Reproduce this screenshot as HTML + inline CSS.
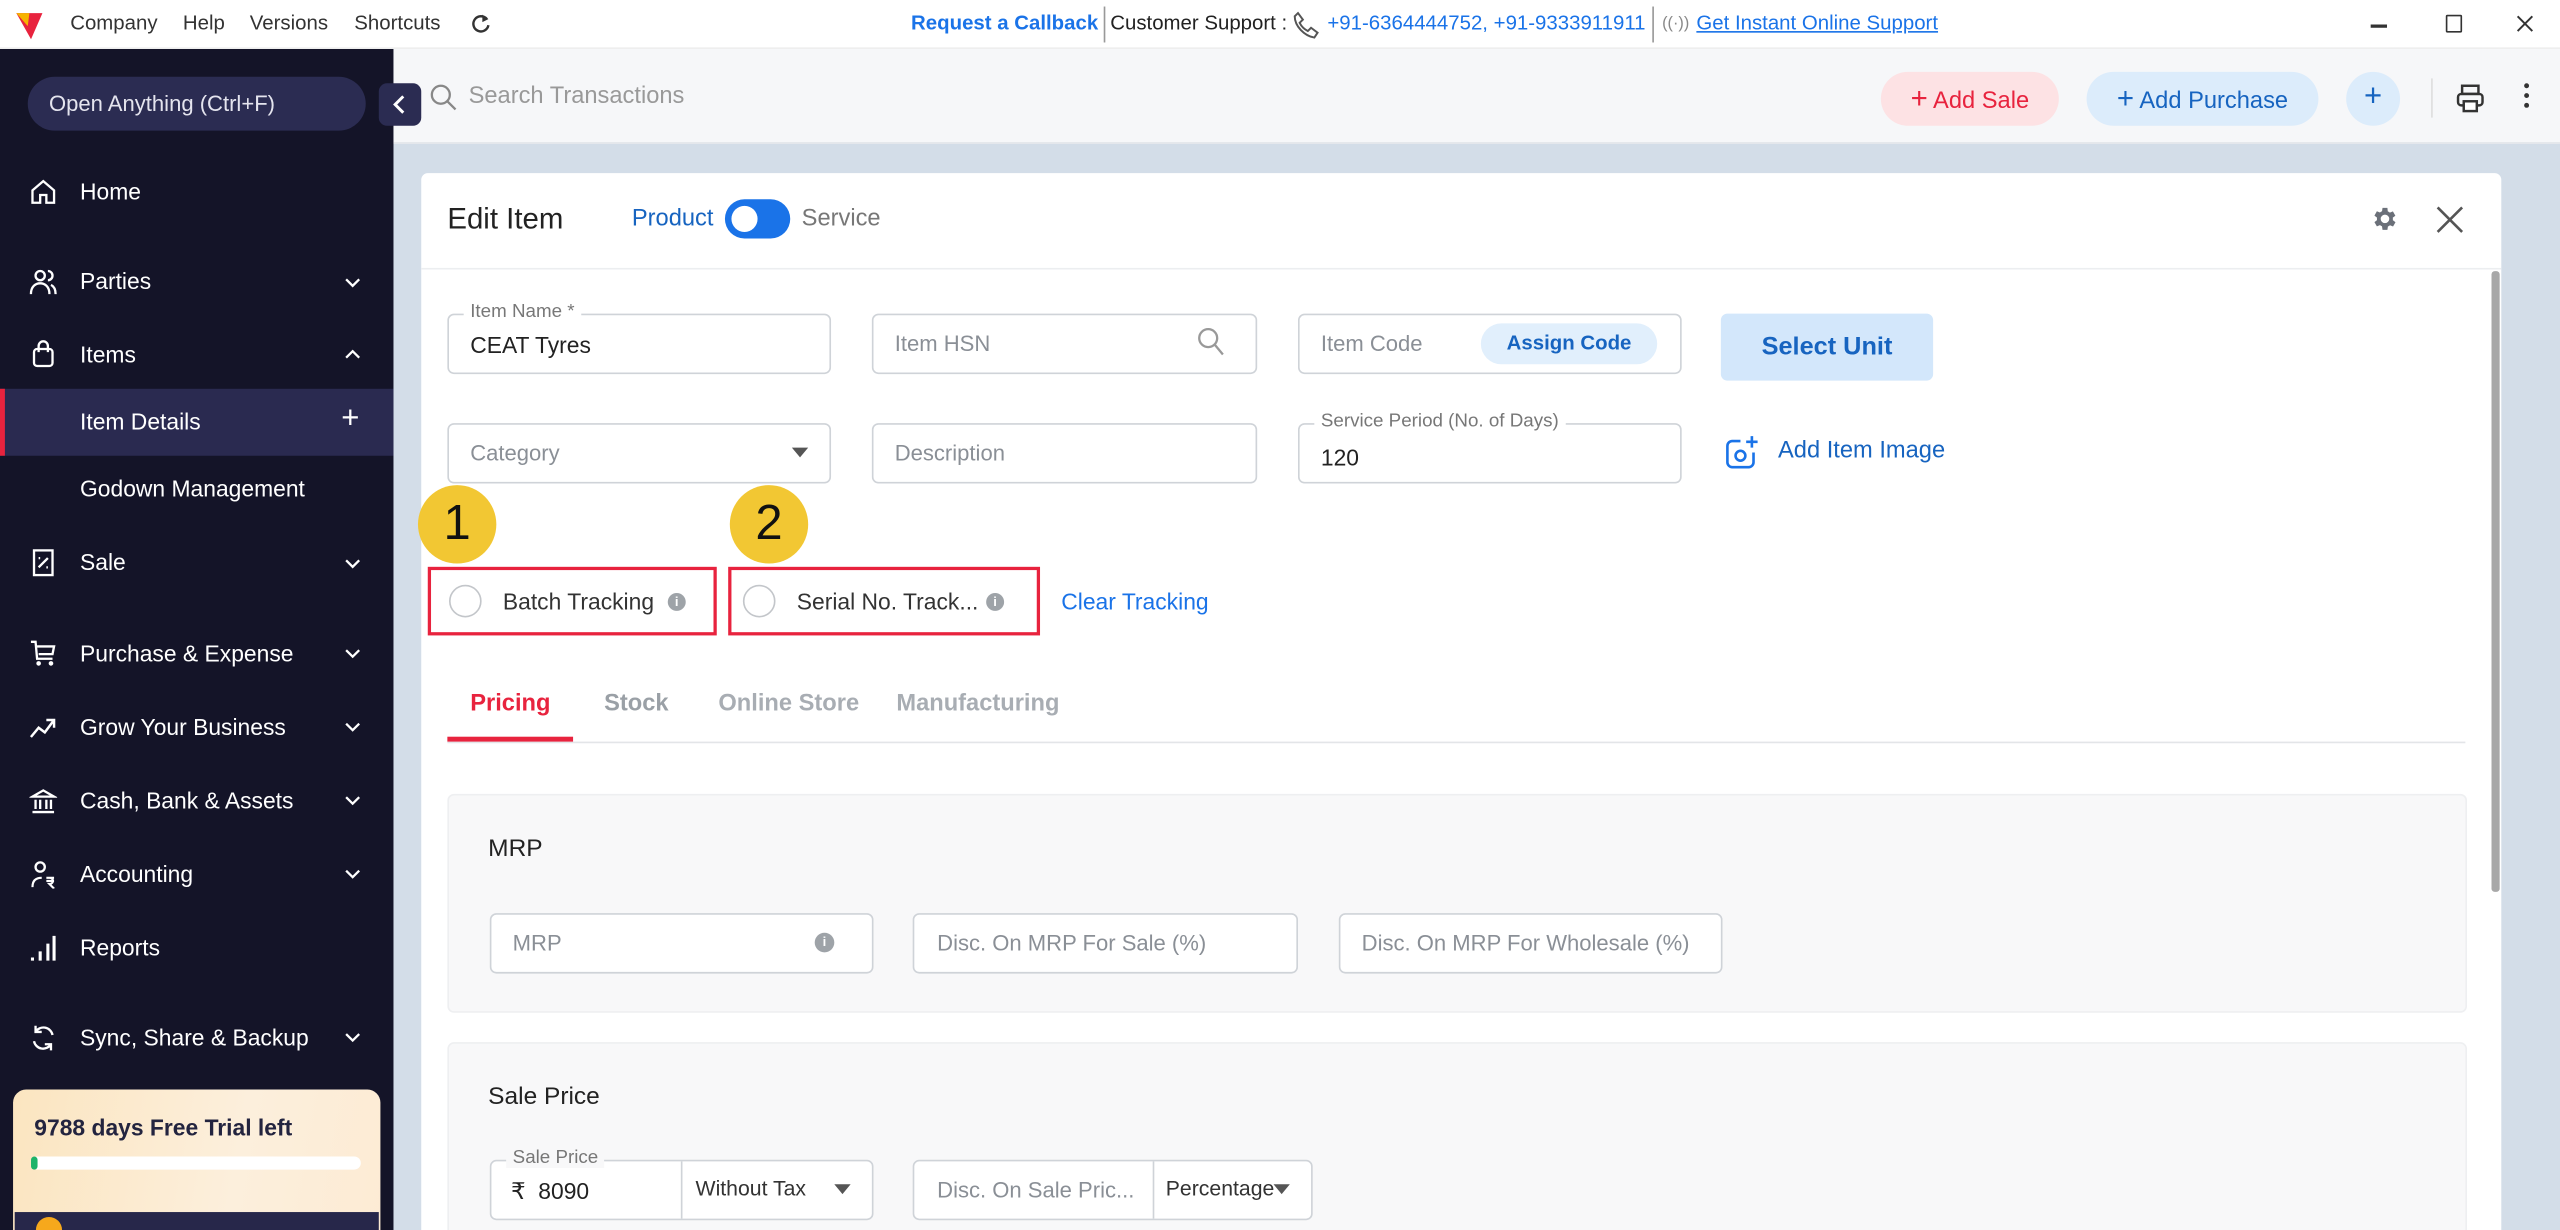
<!DOCTYPE html>
<html><head><meta charset="utf-8"><style>
*{box-sizing:border-box;margin:0;padding:0}
html,body{width:2560px;height:1230px;overflow:hidden;background:#fff}
#w{position:absolute;left:0;top:0;width:1568px;height:753px;transform:scale(1.6327,1.6335);transform-origin:0 0;font-family:"Liberation Sans",sans-serif;overflow:hidden;background:#d3dde8}
.a{position:absolute;white-space:nowrap}
.top{left:0;top:0;width:1568px;height:30px;background:#fff;border-bottom:1px solid #eee}
.tm{font-size:12.5px;color:#333;top:7px}
.sb{left:0;top:30px;width:241px;height:723px;background:#141428}
.mi{color:#fff;font-size:14px;left:49px}
.ic{left:18px;width:17px;height:17px}
.chev{left:211px;width:10px;height:10px}
.hdr{left:241px;top:30px;width:1327px;height:58px;background:#f6f7f9;border-bottom:1px solid #e3e6ea}
.card{left:258px;top:106px;width:1274px;height:660px;background:#fff;border-radius:4px}
.inp{border:1px solid #cfd3d8;border-radius:4px;background:#fff;height:37px}
.ph{font-size:13.5px;color:#8a8f96}
.lbl{font-size:11.5px;color:#777;background:#fff;padding:0 4px}
.badge{width:48px;height:48px;border-radius:50%;background:#f2c733;font-size:30px;color:#111;text-align:center;line-height:48px}
.rb{border:2.5px solid #e8233e}
.radio{width:20px;height:20px;border:1.5px solid #c3c6ca;border-radius:50%}
.info{width:11px;height:11px;border-radius:50%;background:#9ea3a8;color:#fff;font-size:8px;text-align:center;line-height:11px;font-weight:bold}
.sec{background:#f8f8f9;border:1px solid #eeeff1;border-radius:4px}
</style></head><body><div id="w">
<div class="a top"></div>
<svg class="a" style="left:9px;top:7px" width="18" height="18" viewBox="0 0 18 18"><path d="M1 1h16l-7 16z" fill="#e8233e"/><path d="M1 1h8l-1 8z" fill="#f6b400"/></svg>
<div class="a tm" style="left:43px">Company</div><div class="a tm" style="left:112px">Help</div><div class="a tm" style="left:153px">Versions</div><div class="a tm" style="left:217px">Shortcuts</div>
<svg class="a" style="left:288px;top:8px" width="13" height="13" viewBox="0 0 14 14"><path d="M11 4A5 5 0 1 0 12 8" fill="none" stroke="#333" stroke-width="1.6"/><path d="M8 1l4 3-4 2z" fill="#333"/></svg>
<div class="a tm" style="left:558px;color:#1a73e8;font-weight:bold;font-size:12.5px">Request a Callback</div>
<div class="a" style="left:676px;top:4px;width:1px;height:22px;background:#999"></div>
<div class="a tm" style="left:680px;color:#222">Customer Support :</div>
<svg class="a" style="left:791px;top:6px" width="18" height="18" viewBox="0 0 18 18"><path d="M4 2l3 4-2 2c1 2 3 4 5 5l2-2 4 3-2 3C8 16 2 10 2 4z" fill="none" stroke="#555" stroke-width="1.2"/></svg>
<div class="a tm" style="left:813px;color:#1a73e8">+91-6364444752, +91-9333911911</div>
<div class="a" style="left:1012px;top:4px;width:1px;height:22px;background:#999"></div>
<div class="a tm" style="left:1018px;color:#888;font-size:10px;top:9px">((·))</div>
<div class="a tm" style="left:1039px;color:#1a73e8;text-decoration:underline">Get Instant Online Support</div>
<div class="a" style="left:1452px;top:15px;width:10px;height:1.5px;background:#333"></div>
<div class="a" style="left:1498px;top:9px;width:10px;height:11px;border:1.3px solid #333;border-radius:1px"></div>
<svg class="a" style="left:1541px;top:9px" width="11" height="11" viewBox="0 0 11 11"><path d="M1 1l9 9M10 1l-9 9" stroke="#333" stroke-width="1.2"/></svg>
<div class="a sb"></div>
<div class="a" style="left:17px;top:47px;width:207px;height:33px;border-radius:17px;background:#2b2c52;color:#e4e4ee;font-size:13.5px;padding:9px 0 0 13px">Open Anything (Ctrl+F)</div>
<div class="a" style="left:0;top:238px;width:241px;height:41px;background:#2a2a50;border-left:3px solid #e8233e"></div>
<svg class="a ic" style="top:109px" viewBox="0 0 18 18"><path d="M2 8L9 2l7 6v8H11v-5H7v5H2z" fill="none" stroke="#fff" stroke-width="1.5"/></svg>
<div class="a mi" style="top:109px">Home</div>
<svg class="a ic" style="top:164px" viewBox="0 0 18 18"><circle cx="7" cy="5" r="3" fill="none" stroke="#fff" stroke-width="1.5"/><path d="M1 17c0-5 3-7 6-7s6 2 6 7M12 2a3 3 0 0 1 0 6M14 11c2 1 3 3 3 6" fill="none" stroke="#fff" stroke-width="1.5"/></svg>
<div class="a mi" style="top:164px">Parties</div>
<svg class="a ic" style="top:208px" viewBox="0 0 18 18"><rect x="3" y="6" width="12" height="11" rx="2" fill="none" stroke="#fff" stroke-width="1.5"/><path d="M6 8V4a3 3 0 0 1 6 0v4" fill="none" stroke="#fff" stroke-width="1.5"/></svg>
<div class="a mi" style="top:209px">Items</div>
<div class="a mi" style="top:250px">Item Details</div>
<div class="a" style="left:209px;top:246px;color:#fff;font-size:19px">+</div>
<div class="a mi" style="top:291px">Godown Management</div>
<svg class="a ic" style="top:336px" viewBox="0 0 18 18"><rect x="3" y="1" width="12" height="16" fill="none" stroke="#fff" stroke-width="1.5"/><path d="M6 12l6-6M6 6h1M11 12h1" stroke="#fff" stroke-width="1.5"/></svg>
<div class="a mi" style="top:336px">Sale</div>
<svg class="a ic" style="top:391px" viewBox="0 0 18 18"><path d="M1 2h3l1 11h10M5 5h11l-1 5H6" fill="none" stroke="#fff" stroke-width="1.5"/><circle cx="6" cy="16" r="1.5" fill="#fff"/><circle cx="14" cy="16" r="1.5" fill="#fff"/></svg>
<div class="a mi" style="top:392px">Purchase &amp; Expense</div>
<svg class="a ic" style="top:437px" viewBox="0 0 18 18"><path d="M1 15l5-6 4 3 6-8M11 4h5v5" fill="none" stroke="#fff" stroke-width="1.6"/></svg>
<div class="a mi" style="top:437px">Grow Your Business</div>
<svg class="a ic" style="top:482px" viewBox="0 0 18 18"><path d="M2 6L9 2l7 4zM2 16h14M4 8v6M7 8v6M11 8v6M14 8v6" fill="none" stroke="#fff" stroke-width="1.5"/></svg>
<div class="a mi" style="top:482px">Cash, Bank &amp; Assets</div>
<svg class="a ic" style="top:527px" viewBox="0 0 18 18"><circle cx="7" cy="4" r="3" fill="none" stroke="#fff" stroke-width="1.5"/><path d="M2 17c0-4 2-6 6-6M11 11h5M11 13h5M13 11c3 0 3 4 0 4l3 3" fill="none" stroke="#fff" stroke-width="1.4"/></svg>
<div class="a mi" style="top:527px">Accounting</div>
<svg class="a ic" style="top:572px" viewBox="0 0 18 18"><path d="M2 17v-2M7 17v-6M12 17V6M16 17V1" stroke="#fff" stroke-width="2"/></svg>
<div class="a mi" style="top:572px">Reports</div>
<svg class="a ic" style="top:627px" viewBox="0 0 18 18"><path d="M15 7A6 6 0 0 0 4 5M3 11a6 6 0 0 0 11 2M4 1v4h4M14 17v-4h-4" fill="none" stroke="#fff" stroke-width="1.5"/></svg>
<div class="a mi" style="top:627px">Sync, Share &amp; Backup</div>
<svg class="a chev" style="top:168px" viewBox="0 0 10 10"><path d="M1 3l4 4 4-4" fill="none" stroke="#fff" stroke-width="1.4"/></svg>
<svg class="a chev" style="top:212px" viewBox="0 0 10 10"><path d="M1 7l4-4 4 4" fill="none" stroke="#fff" stroke-width="1.4"/></svg>
<svg class="a chev" style="top:340px" viewBox="0 0 10 10"><path d="M1 3l4 4 4-4" fill="none" stroke="#fff" stroke-width="1.4"/></svg>
<svg class="a chev" style="top:395px" viewBox="0 0 10 10"><path d="M1 3l4 4 4-4" fill="none" stroke="#fff" stroke-width="1.4"/></svg>
<svg class="a chev" style="top:440px" viewBox="0 0 10 10"><path d="M1 3l4 4 4-4" fill="none" stroke="#fff" stroke-width="1.4"/></svg>
<svg class="a chev" style="top:485px" viewBox="0 0 10 10"><path d="M1 3l4 4 4-4" fill="none" stroke="#fff" stroke-width="1.4"/></svg>
<svg class="a chev" style="top:530px" viewBox="0 0 10 10"><path d="M1 3l4 4 4-4" fill="none" stroke="#fff" stroke-width="1.4"/></svg>
<svg class="a chev" style="top:630px" viewBox="0 0 10 10"><path d="M1 3l4 4 4-4" fill="none" stroke="#fff" stroke-width="1.4"/></svg>
<div class="a" style="left:8px;top:667px;width:225px;height:100px;border-radius:8px;background:linear-gradient(100deg,#fbe5c0,#fcefdc 60%,#fdebd4)"></div>
<div class="a" style="left:21px;top:682px;font-size:14px;font-weight:bold;color:#23243f">9788 days Free Trial left</div>
<div class="a" style="left:19px;top:708px;width:202px;height:8px;border-radius:4px;background:#fff"></div>
<div class="a" style="left:19px;top:708px;width:4px;height:8px;border-radius:2px;background:#1db36a"></div>
<div class="a" style="left:9px;top:742px;width:223px;height:20px;background:#27274a"></div>
<div class="a" style="left:22px;top:745px;width:16px;height:16px;border-radius:50%;background:#f6a81c"></div>
<div class="a hdr"></div>
<div class="a" style="left:232px;top:51px;width:26px;height:26px;border-radius:5px;background:#2b2c52"></div>
<svg class="a" style="left:240px;top:58px" width="10" height="12" viewBox="0 0 10 12"><path d="M7 1L2 6l5 5" fill="none" stroke="#fff" stroke-width="1.8"/></svg>
<svg class="a" style="left:263px;top:51px" width="17" height="17" viewBox="0 0 17 17"><circle cx="7" cy="7" r="5.5" fill="none" stroke="#888" stroke-width="1.4"/><path d="M11 11l5 5" stroke="#888" stroke-width="1.4"/></svg>
<div class="a" style="left:287px;top:51px;font-size:14.5px;color:#999">Search Transactions</div>
<div class="a" style="left:1152px;top:44px;width:109px;height:33px;border-radius:17px;background:#fde2e4;color:#e8233e;font-size:14.5px;text-align:center;line-height:33px"><span style="font-size:18px">+</span> Add Sale</div>
<div class="a" style="left:1278px;top:44px;width:142px;height:33px;border-radius:17px;background:#dcecfb;color:#1764c0;font-size:14.5px;text-align:center;line-height:33px"><span style="font-size:18px">+</span> Add Purchase</div>
<div class="a" style="left:1437px;top:44px;width:33px;height:33px;border-radius:50%;background:#dcecfb;color:#1764c0;font-size:19px;text-align:center;line-height:32px">+</div>
<div class="a" style="left:1489px;top:48px;width:1px;height:24px;background:#ddd"></div>
<svg class="a" style="left:1504px;top:51px" width="18" height="18" viewBox="0 0 18 18"><rect x="4" y="1.5" width="10" height="5" fill="none" stroke="#333" stroke-width="1.5"/><rect x="1.5" y="6.5" width="15" height="7" rx="2" fill="none" stroke="#333" stroke-width="1.5"/><rect x="5" y="11" width="8" height="6" fill="#fff" stroke="#333" stroke-width="1.5"/></svg>
<div class="a" style="left:1546px;top:51px;width:3px;height:3px;border-radius:50%;background:#333;box-shadow:0 6px 0 #333,0 12px 0 #333"></div>
<div class="a card"></div>
<div class="a" style="left:274px;top:124px;font-size:18px;color:#222">Edit Item</div>
<div class="a" style="left:387px;top:126px;font-size:14.5px;color:#1764c0">Product</div>
<div class="a" style="left:444px;top:122px;width:40px;height:24px;border-radius:12px;background:#1a73e8"></div>
<div class="a" style="left:448px;top:126px;width:16px;height:16px;border-radius:50%;background:#fff"></div>
<div class="a" style="left:491px;top:126px;font-size:14.5px;color:#777">Service</div>
<svg class="a" style="left:1451px;top:125px" width="18" height="18" viewBox="0 0 24 24"><path fill="#6b7079" d="M19.4 13a7.5 7.5 0 0 0 0-2l2.1-1.6-2-3.5-2.5 1a7 7 0 0 0-1.7-1L15 3h-4l-.4 2.8a7 7 0 0 0-1.7 1l-2.5-1-2 3.5L6.5 11a7.5 7.5 0 0 0 0 2l-2.1 1.6 2 3.5 2.5-1a7 7 0 0 0 1.7 1L11 21h4l.4-2.8a7 7 0 0 0 1.7-1l2.5 1 2-3.5zM13 15.5a3.5 3.5 0 1 1 0-7 3.5 3.5 0 0 1 0 7z"/></svg>
<svg class="a" style="left:1491px;top:125px" width="19" height="19" viewBox="0 0 19 19"><path d="M2 2l15 15M17 2L2 17" stroke="#555" stroke-width="1.6"/></svg>
<div class="a" style="left:258px;top:164px;width:1274px;height:1px;background:#eceef0"></div>
<div class="a" style="left:1526px;top:166px;width:5px;height:380px;background:#a8a8a8;border-radius:2px"></div>
<div class="a inp" style="left:274px;top:192px;width:235px"></div>
<div class="a lbl" style="left:284px;top:185px">Item Name *</div>
<div class="a" style="left:288px;top:203px;font-size:14px;color:#222">CEAT Tyres</div>
<div class="a inp" style="left:534px;top:192px;width:236px"></div>
<div class="a ph" style="left:548px;top:203px">Item HSN</div>
<svg class="a" style="left:733px;top:200px" width="17" height="18" viewBox="0 0 17 18"><circle cx="7" cy="7" r="5.5" fill="none" stroke="#999" stroke-width="1.4"/><path d="M11 11l5 6" stroke="#999" stroke-width="1.4"/></svg>
<div class="a inp" style="left:795px;top:192px;width:235px"></div>
<div class="a ph" style="left:809px;top:203px">Item Code</div>
<div class="a" style="left:907px;top:198px;width:108px;height:25px;border-radius:13px;background:#e1effc;color:#1764c0;font-size:12.5px;font-weight:bold;text-align:center;line-height:25px">Assign Code</div>
<div class="a" style="left:1054px;top:192px;width:130px;height:41px;border-radius:4px;background:#d3e7fb;color:#1764c0;font-size:15.5px;font-weight:bold;text-align:center;line-height:41px">Select Unit</div>
<div class="a inp" style="left:274px;top:259px;width:235px"></div>
<div class="a ph" style="left:288px;top:270px">Category</div>
<div class="a" style="left:485px;top:274px;border-left:5px solid transparent;border-right:5px solid transparent;border-top:6px solid #555"></div>
<div class="a inp" style="left:534px;top:259px;width:236px"></div>
<div class="a ph" style="left:548px;top:270px">Description</div>
<div class="a inp" style="left:795px;top:259px;width:235px"></div>
<div class="a lbl" style="left:805px;top:252px">Service Period (No. of Days)</div>
<div class="a" style="left:809px;top:272px;font-size:14px;color:#222">120</div>
<svg class="a" style="left:1056px;top:266px" width="22" height="22" viewBox="0 0 22 22"><path d="M10 4H5a3 3 0 0 0-3 3v10a3 3 0 0 0 3 3h10a3 3 0 0 0 3-3v-6" fill="none" stroke="#1a73e8" stroke-width="1.6"/><circle cx="10" cy="13" r="3" fill="none" stroke="#1a73e8" stroke-width="1.6"/><path d="M17 1v7M13.5 4.5h7" stroke="#1a73e8" stroke-width="1.6"/></svg>
<div class="a" style="left:1089px;top:268px;font-size:14.5px;color:#1764c0">Add Item Image</div>
<div class="a badge" style="left:256px;top:297px">1</div>
<div class="a badge" style="left:447px;top:297px">2</div>
<div class="a rb" style="left:262px;top:347px;width:177px;height:42px"></div>
<div class="a rb" style="left:446px;top:347px;width:191px;height:42px"></div>
<div class="a radio" style="left:275px;top:358px"></div>
<div class="a" style="left:308px;top:360px;font-size:14px;color:#333">Batch Tracking</div>
<div class="a info" style="left:409px;top:363px">i</div>
<div class="a radio" style="left:455px;top:358px"></div>
<div class="a" style="left:488px;top:360px;font-size:14px;color:#333">Serial No. Track...</div>
<div class="a info" style="left:604px;top:363px">i</div>
<div class="a" style="left:650px;top:360px;font-size:14px;color:#1a73e8">Clear Tracking</div>
<div class="a" style="left:288px;top:423px;font-size:14.5px;font-weight:bold;color:#e8233e">Pricing</div>
<div class="a" style="left:370px;top:423px;font-size:14.5px;font-weight:bold;color:#9aa0a6">Stock</div>
<div class="a" style="left:440px;top:423px;font-size:14.5px;font-weight:bold;color:#a8adb3">Online Store</div>
<div class="a" style="left:549px;top:423px;font-size:14.5px;font-weight:bold;color:#a8adb3">Manufacturing</div>
<div class="a" style="left:274px;top:454px;width:1236px;height:1px;background:#e3e5e8"></div>
<div class="a" style="left:274px;top:451px;width:77px;height:3px;background:#e8233e"></div>
<div class="a sec" style="left:274px;top:486px;width:1237px;height:134px"></div>
<div class="a" style="left:299px;top:511px;font-size:15px;color:#222">MRP</div>
<div class="a inp" style="left:300px;top:559px;width:235px"></div>
<div class="a ph" style="left:314px;top:570px">MRP</div>
<div class="a info" style="left:499px;top:571px;width:12px;height:12px">i</div>
<div class="a inp" style="left:559px;top:559px;width:236px"></div>
<div class="a ph" style="left:574px;top:570px">Disc. On MRP For Sale (%)</div>
<div class="a inp" style="left:820px;top:559px;width:235px"></div>
<div class="a ph" style="left:834px;top:570px">Disc. On MRP For Wholesale (%)</div>
<div class="a sec" style="left:274px;top:638px;width:1237px;height:140px"></div>
<div class="a" style="left:299px;top:663px;font-size:15px;color:#222">Sale Price</div>
<div class="a inp" style="left:300px;top:710px;width:235px"></div>
<div class="a" style="left:417px;top:711px;width:1px;height:35px;background:#cfd3d8"></div>
<div class="a lbl" style="left:310px;top:703px;background:#f8f8f9">Sale Price</div>
<div class="a" style="left:313px;top:721px;font-size:14px;color:#222">₹&nbsp;&nbsp;8090</div>
<div class="a" style="left:426px;top:720px;font-size:13px;color:#333">Without Tax</div>
<div class="a" style="left:511px;top:725px;border-left:5px solid transparent;border-right:5px solid transparent;border-top:6px solid #555"></div>
<div class="a inp" style="left:559px;top:710px;width:245px"></div>
<div class="a" style="left:706px;top:711px;width:1px;height:35px;background:#cfd3d8"></div>
<div class="a ph" style="left:574px;top:721px">Disc. On Sale Pric...</div>
<div class="a" style="left:714px;top:720px;font-size:13px;color:#333">Percentage</div>
<div class="a" style="left:780px;top:725px;border-left:5px solid transparent;border-right:5px solid transparent;border-top:6px solid #555"></div>
</div></body></html>
